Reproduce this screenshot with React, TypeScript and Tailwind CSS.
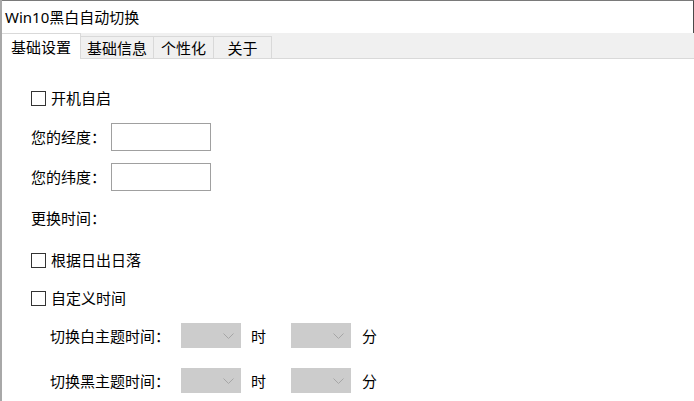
import React from 'react';

const font = "font-['Noto_Sans','Noto_Sans_CJK_SC',sans-serif]";

const Checkbox: React.FC<{ label: string }> = ({ label }) => (
  <div className="flex items-center h-[20px]">
    <span className="w-[15px] h-[15px] border border-[#333333] bg-white box-border" />
    <span className="ml-[5px] text-[15px] leading-[20px]">{label}</span>
  </div>
);

const Chevron = () => (
  <svg width="11" height="6" viewBox="0 0 11 6" fill="none" stroke="#a6a6a6" strokeWidth="1">
    <path d="M0.5 0.5 L5.5 5.5 L10.5 0.5" />
  </svg>
);

const Select = () => (
  <div className="w-[60px] h-[25px] bg-[#cccccc] flex items-center justify-end pr-[7px]">
    <Chevron />
  </div>
);

const TimeRow: React.FC<{ label: string }> = ({ label }) => (
  <div className="flex items-center h-[25px] pl-[19px]">
    <span className="w-[131px] text-[15px] leading-[20px]">{label}</span>
    <Select />
    <span className="ml-[10px] w-[40px] text-[15px] leading-[20px]">时</span>
    <Select />
    <span className="ml-[11px] text-[15px] leading-[20px]">分</span>
  </div>
);

const tabs = [
  { name: '基础设置', w: 'w-[79px]' },
  { name: '基础信息', w: 'w-[73px]' },
  { name: '个性化', w: 'w-[60px]' },
  { name: '关于', w: 'w-[58px]' },
];

export default function App() {
  return (
    <div className={`w-[694px] h-[401px] bg-white text-black overflow-hidden flex flex-col border-l-2 border-[#a8a8a8] ${font}`}>
      <div className="h-[33px] shrink-0 flex items-center pl-[3px] border-t border-[#7a7a7a] border-r border-r-[#4a4a4a]">
        <span className="text-[15px] leading-[20px]">Win10黑白自动切换</span>
      </div>
      <div className="h-[26px] shrink-0 bg-[#f0f0f0] border-b border-[#d9d9d9] flex items-end">
        {tabs.map((t, i) =>
          i === 0 ? (
            <div
              key={t.name}
              className={`${t.w} h-[26px] -mb-px bg-white border-t border-r border-[#d9d9d9] flex items-center justify-center text-[15px] leading-[20px]`}
            >
              {t.name}
            </div>
          ) : (
            <div
              key={t.name}
              className={`${t.w} h-[22px] border-t border-r border-[#d9d9d9] flex items-center justify-center text-[15px] leading-[20px]`}
            >
              {t.name}
            </div>
          )
        )}
      </div>
      <div className="flex flex-col pl-[29px]">
        <div className="mt-[29px]">
          <Checkbox label="开机自启" />
        </div>
        <div className="mt-[15px] flex items-center h-[28px]">
          <span className="w-[80px] text-[15px] leading-[20px]">您的经度：</span>
          <div className="w-[100px] h-[28px] border border-[#a0a0a0] bg-white" />
        </div>
        <div className="mt-[12px] flex items-center h-[28px]">
          <span className="w-[80px] text-[15px] leading-[20px]">您的纬度：</span>
          <div className="w-[100px] h-[28px] border border-[#a0a0a0] bg-white" />
        </div>
        <div className="mt-[17px] h-[20px] flex items-center">
          <span className="text-[15px] leading-[20px]">更换时间：</span>
        </div>
        <div className="mt-[22px]">
          <Checkbox label="根据日出日落" />
        </div>
        <div className="mt-[18px]">
          <Checkbox label="自定义时间" />
        </div>
        <div className="mt-[15px]">
          <TimeRow label="切换白主题时间：" />
        </div>
        <div className="mt-[20px]">
          <TimeRow label="切换黑主题时间：" />
        </div>
      </div>
    </div>
  );
}
